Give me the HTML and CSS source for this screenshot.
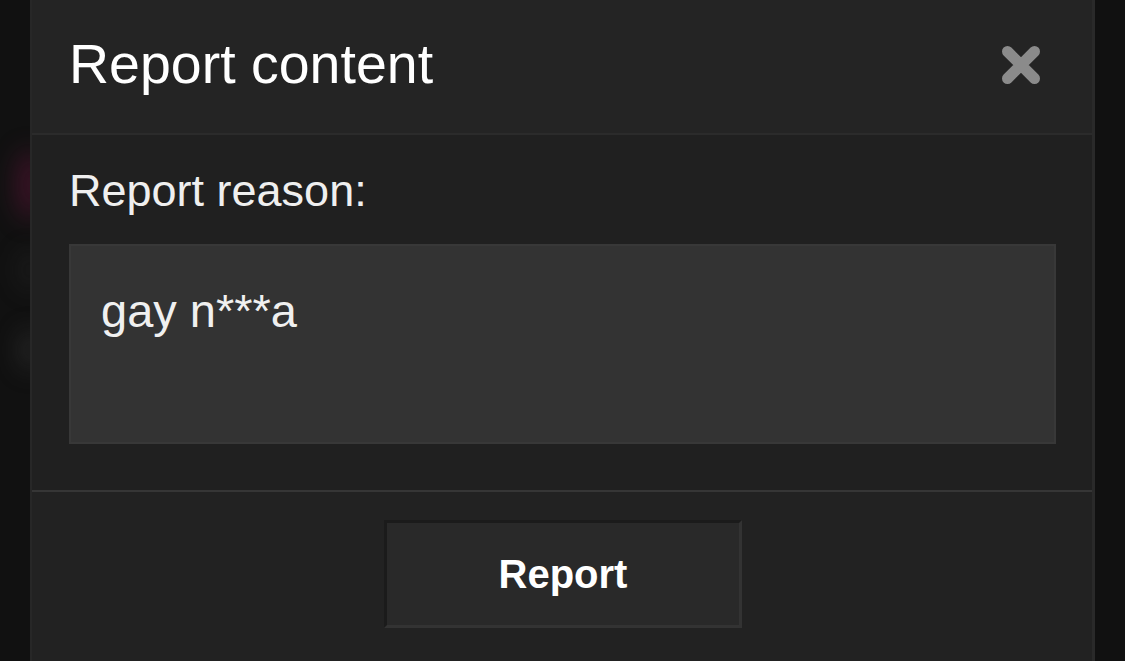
FILE: index.html
```html
<!DOCTYPE html>
<html lang="en">
<head>
<meta charset="utf-8">
<title>Report content</title>
<link rel="stylesheet" href="styles.css">
</head>
<body>
<div class="backdrop">
  <div class="glow glow-pink"></div>
  <div class="glow glow-gray-1"></div>
  <div class="glow glow-gray-2"></div>
</div>
<div class="dialog">
  <div class="dialog-header">
    <h1 class="dialog-title">Report content</h1>
    <button class="close-btn" aria-label="Close">
      <svg width="38" height="38" viewBox="0 0 38 38" aria-hidden="true">
        <path d="M5.5 5.5 L32.5 32.5 M32.5 5.5 L5.5 32.5" stroke="#8b8b8b" stroke-width="11" stroke-linecap="round" fill="none"/>
      </svg>
    </button>
  </div>
  <div class="dialog-body">
    <label class="field-label" for="reason">Report reason:</label>
    <textarea id="reason" class="reason-input">gay n***a</textarea>
  </div>
  <div class="dialog-footer">
    <button class="report-btn">Report</button>
  </div>
</div>
</body>
</html>
```
FILE: styles.css
```css
* { box-sizing: border-box; }

html, body {
  margin: 0;
  padding: 0;
  height: 100%;
}

body {
  background: #111111;
  font-family: "Liberation Sans", Arial, Helvetica, sans-serif;
  color: #f2f2f2;
  overflow: hidden;
  position: relative;
}

.backdrop {
  position: absolute;
  inset: 0;
  z-index: 0;
  overflow: hidden;
}

.glow {
  position: absolute;
  border-radius: 50%;
  filter: blur(12px);
}

.glow-pink {
  left: 16px;
  top: 150px;
  width: 28px;
  height: 70px;
  background: rgba(110, 20, 65, 0.45);
}

.glow-gray-1 {
  left: 20px;
  top: 250px;
  width: 18px;
  height: 40px;
  background: rgba(60, 60, 60, 0.3);
}

.glow-gray-2 {
  left: 20px;
  top: 330px;
  width: 20px;
  height: 40px;
  background: rgba(75, 75, 75, 0.4);
}

.dialog {
  position: relative;
  z-index: 1;
  margin-left: 30px;
  width: 1065px;
  height: 661px;
  border-left: 2px solid #272727;
  border-right: 3px solid #2a2a2a;
  display: flex;
  flex-direction: column;
  background: #222222;
}

.dialog-header {
  height: 135px;
  background: #242424;
  border-bottom: 2px solid #2b2b2b;
  display: flex;
  align-items: center;
  justify-content: space-between;
  padding: 0 52px 4px 37px;
}

.dialog-title {
  margin: 0;
  font-size: 55.5px;
  font-weight: normal;
  line-height: 1.2;
  color: #ffffff;
}

.close-btn {
  background: none;
  border: 0;
  padding: 0;
  width: 38px;
  height: 38px;
  display: flex;
  cursor: pointer;
}

.dialog-body {
  background: #202020;
  padding: 29px 36px 46px 37px;
  display: flex;
  flex-direction: column;
}

.field-label {
  font-size: 45px;
  line-height: 54px;
  color: #efefef;
  margin-bottom: 26px;
}

.reason-input {
  width: 987px;
  height: 200px;
  background: #333333;
  border: 2px solid #383838;
  color: #f0f0f0;
  font-family: "Liberation Sans", Arial, Helvetica, sans-serif;
  font-size: 47px;
  line-height: 56px;
  padding: 37px 30px 0 30px;
  resize: none;
  outline: none;
  overflow: hidden;
  margin: 0;
}

.dialog-footer {
  flex: 1;
  background: #222222;
  border-top: 2px solid #363636;
  display: flex;
  justify-content: center;
  align-items: flex-start;
  padding-top: 28px;
  padding-left: 2px;
}

.report-btn {
  width: 358px;
  height: 108px;
  background: #292929;
  border-style: solid;
  border-width: 3px;
  border-color: #1b1b1b #333333 #333333 #1b1b1b;
  color: #ffffff;
  font-family: "Liberation Sans", Arial, Helvetica, sans-serif;
  font-size: 40px;
  font-weight: bold;
  padding: 0;
  cursor: pointer;
}
```
